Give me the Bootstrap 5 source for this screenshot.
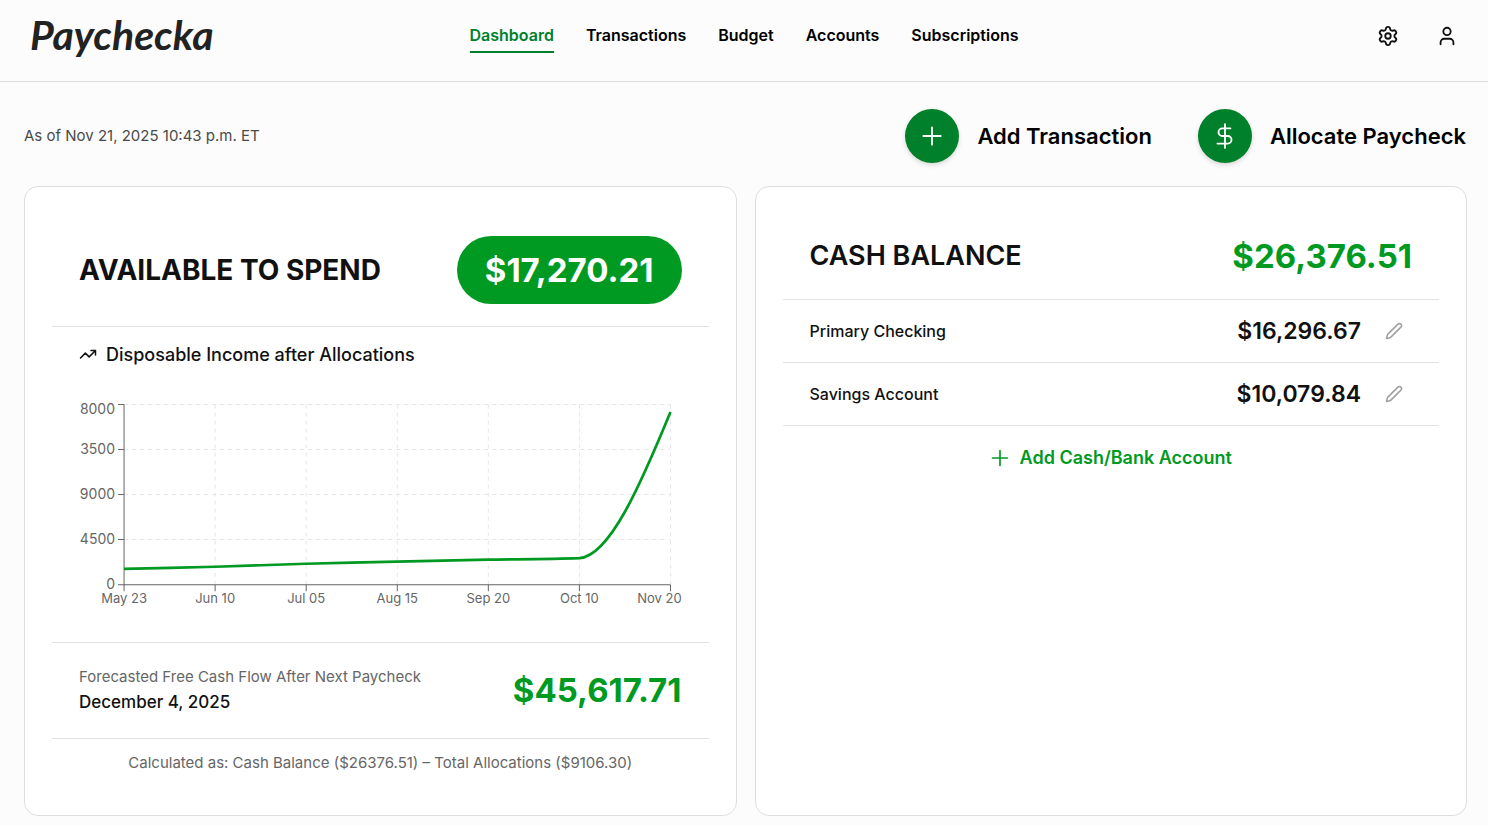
<!DOCTYPE html>
<html lang="en">
<head>
<meta charset="utf-8">
<meta name="viewport" content="width=device-width, initial-scale=1">
<title>Paychecka – Dashboard</title>
<link href="https://cdn.jsdelivr.net/npm/bootstrap@5.3.0/dist/css/bootstrap.min.css" rel="stylesheet">
<style>
  :root { --brand: #00802b; --money: #009a22; --line: #dedede; --ink: #111; }
  body { font-family: Inter, "Liberation Sans", sans-serif; font-size: 16px; line-height: 24px; background: #fcfcfc; color: var(--ink); }
  svg { display: block; }
  .icon { fill: none; stroke: currentColor; stroke-width: 2; stroke-linecap: round; stroke-linejoin: round; flex: none; }
  .icon-thin { stroke-width: 1.7; }
  .site-header { border-bottom: 1px solid var(--line); min-height: 82px; padding: 0 30px; }
  .side { flex: 1 1 0; }
  .brand-name { font-family: Lato, sans-serif; font-style: italic; font-weight: 700; font-size: 41px; line-height: 70px; color: #222; text-decoration: none; }
  .main-nav { gap: 32px; padding-top: 19px; }
  .main-nav a { color: #000; font-weight: 600; text-decoration: none; padding: 4px 0; border-bottom: 2px solid transparent; }
  .main-nav a.active { color: var(--brand); border-color: var(--brand); }
  .tools { gap: 37px; padding-top: 25px; }
  .plain { border: 0; background: none; padding: 0; color: inherit; }
  main { padding: 27px 21px 9px 24px; }
  .stamp { color: #4a4a4a; font-size: 15px; }
  .actions { gap: 46px; padding-right: 1px; }
  .action { font-size: 22px; font-weight: 600; color: #000; gap: 18px; }
  .disc { width: 54px; height: 54px; border-radius: 50%; background: var(--brand); color: #fff; box-shadow: 0 2px 5px rgba(0,0,0,.15); }
  .panels { --bs-gutter-x: 18px; margin-top: 23px; }
  .panel { background: #fff; border: 1px solid var(--line); border-radius: 14px; padding: 27px; height: 100%; }
  .band { padding-left: 27px; padding-right: 27px; border-bottom: 1px solid #e2e2e2; }
  .band-top { padding-top: 22px; padding-bottom: 22px; }
  .band-balance { padding-top: 22px; padding-bottom: 23px; }
  h2 { font-size: 28px; line-height: 40px; margin: 0; font-weight: 700; }
  h2.mid { font-size: 27px; font-weight: 600; }
  .total { font-size: 33px; line-height: 40px; font-weight: 700; color: var(--money); }
  .pill { background: var(--money); color: #fff; border-radius: 34px; padding: 14px 28px; }
  .chart-title { font-size: 18px; font-weight: 500; gap: 9px; padding-top: 16px; }
  .chart { width: 100%; margin-top: 28px; }
  .chart text { font-size: 13px; fill: #666; }
  .chart .scale text { font-size: 14px; }
  .chart-band { padding-bottom: 22px; }
  .forecast { padding-top: 22px; padding-bottom: 23px; }
  .muted { color: #666; font-size: 15px; }
  .date { font-size: 17px; line-height: 26px; font-weight: 500; }
  .note { padding: 12px 0 13px; }
  .account { height: 63px; }
  .acc-name { font-weight: 500; }
  .amount { font-size: 23px; font-weight: 600; }
  .pencil { color: #a0a0a0; margin: 0 9px 0 24px; }
  .add-account { color: var(--money); font-size: 18px; font-weight: 600; gap: 10px; padding-top: 20px; }
</style>
</head>
<body>
<header class="site-header d-flex align-items-start">
  <div class="side"><a class="brand-name" href="#">Paychecka</a></div>
  <nav class="main-nav d-flex" aria-label="Main">
    <a class="active" href="#" aria-current="page">Dashboard</a>
    <a href="#">Transactions</a>
    <a href="#">Budget</a>
    <a href="#">Accounts</a>
    <a href="#">Subscriptions</a>
  </nav>
  <div class="side tools d-flex justify-content-end">
    <button class="plain" type="button" aria-label="Settings"><svg class="icon" width="22" height="22" viewBox="0 0 24 24"><path d="M9.671 4.136a2.34 2.34 0 0 1 4.659 0 2.34 2.34 0 0 0 3.319 1.915 2.34 2.34 0 0 1 2.33 4.033 2.34 2.34 0 0 0 0 3.831 2.34 2.34 0 0 1-2.33 4.033 2.34 2.34 0 0 0-3.319 1.915 2.34 2.34 0 0 1-4.659 0 2.34 2.34 0 0 0-3.32-1.915 2.34 2.34 0 0 1-2.33-4.033 2.34 2.34 0 0 0 0-3.831A2.34 2.34 0 0 1 6.35 6.051a2.34 2.34 0 0 0 3.319-1.915"/><circle cx="12" cy="12" r="3"/></svg></button>
    <button class="plain" type="button" aria-label="Profile"><svg class="icon" width="22" height="22" viewBox="0 0 24 24"><path d="M19 21v-2a4 4 0 0 0-4-4H9a4 4 0 0 0-4 4v2"/><circle cx="12" cy="7" r="4"/></svg></button>
  </div>
</header>

<main>
  <div class="d-flex justify-content-between align-items-center">
    <div class="stamp">As of Nov 21, 2025 10:43 p.m. ET</div>
    <div class="actions d-flex">
      <button class="plain action d-flex align-items-center" type="button">
        <span class="disc d-flex align-items-center justify-content-center"><svg class="icon icon-thin" width="26" height="26" viewBox="0 0 24 24"><path d="M4 12h16M12 4v16"/></svg></span>
        Add Transaction
      </button>
      <button class="plain action d-flex align-items-center" type="button">
        <span class="disc d-flex align-items-center justify-content-center"><svg class="icon icon-thin" width="26" height="26" viewBox="0 0 24 24"><path d="M12 1v22M17 5H9.500a3.500 3.500 0 0 0 0 7h5a3.500 3.500 0 0 1 0 7H5"/></svg></span>
        Allocate Paycheck
      </button>
    </div>
  </div>

  <div class="row panels">
    <div class="col-6">
      <section class="panel">
        <div class="band band-top d-flex justify-content-between align-items-center">
          <h2>AVAILABLE TO SPEND</h2>
          <div class="total pill">$17,270.21</div>
        </div>
        <div class="band chart-band">
          <div class="chart-title d-flex align-items-center">
            <svg class="icon" width="18" height="18" viewBox="0 0 24 24"><path d="M16 6h6v6M22 6l-8.500 8.500-5-5L2 16"/></svg>
            Disposable Income after Allocations
          </div>
          <svg class="chart" viewBox="-1 0 602 225" role="img" aria-label="Disposable income from May 23 to Nov 20">
            <g stroke="#e6e6e6" stroke-dasharray="4 4" fill="none">
              <path d="M44 9.500H590M44 54.500H590M44 99.500H590M44 144.500H590"/>
              <path d="M135 9.500V189M226 9.500V189M317 9.500V189M408 9.500V189M499 9.500V189M590 9.500V189"/>
            </g>
            <g stroke="#666" fill="none">
              <path d="M44 9.500V189.500H590"/>
              <path d="M38 9.500H44M38 54.500H44M38 99.500H44M38 144.500H44M38 189.500H44"/>
              <path d="M44 189.500V196M135 189.500V196M226 189.500V196M317 189.500V196M408 189.500V196M499 189.500V196M590 189.500V196"/>
            </g>
            <path fill="none" stroke="#009a22" stroke-width="2.700" d="M44 173.700C74 173.200 105 172.500 135 171.600C165 170.700 196 169.500 226 168.600C256 167.700 287 167.200 317 166.500C347 165.800 378 165.100 408 164.600C438 164.100 469 164 499 163C529 161 560 90 590 17"/>
            <g class="scale" text-anchor="end">
              <text x="35" y="19">8000</text><text x="35" y="59">3500</text><text x="35" y="104">9000</text><text x="35" y="149">4500</text><text x="35" y="194">0</text>
            </g>
            <g text-anchor="middle">
              <text x="44" y="208">May 23</text><text x="135" y="208">Jun 10</text><text x="226" y="208">Jul 05</text><text x="317" y="208">Aug 15</text><text x="408" y="208">Sep 20</text><text x="499" y="208">Oct 10</text><text x="579" y="208">Nov 20</text>
            </g>
          </svg>
        </div>
        <div class="band forecast d-flex justify-content-between align-items-center">
          <div>
            <div class="muted">Forecasted Free Cash Flow After Next Paycheck</div>
            <div class="date">December 4, 2025</div>
          </div>
          <div class="total">$45,617.71</div>
        </div>
        <div class="note muted text-center">Calculated as: Cash Balance ($26376.51) – Total Allocations ($9106.30)</div>
      </section>
    </div>
    <div class="col-6">
      <section class="panel">
        <div class="band band-balance d-flex justify-content-between align-items-center">
          <h2 class="mid">CASH BALANCE</h2>
          <div class="total">$26,376.51</div>
        </div>
        <div class="band account d-flex align-items-center">
          <span class="acc-name flex-fill">Primary Checking</span>
          <span class="amount">$16,296.67</span>
          <button class="plain pencil" type="button" aria-label="Edit Primary Checking"><svg class="icon" width="18" height="18" viewBox="0 0 24 24"><path d="M21.174 6.812a1 1 0 0 0-3.986-3.987L3.842 16.174a2 2 0 0 0-.5.83l-1.321 4.352a.5.5 0 0 0 .623.622l4.353-1.320a2 2 0 0 0 .83-.497z"/></svg></button>
        </div>
        <div class="band account d-flex align-items-center">
          <span class="acc-name flex-fill">Savings Account</span>
          <span class="amount">$10,079.84</span>
          <button class="plain pencil" type="button" aria-label="Edit Savings Account"><svg class="icon" width="18" height="18" viewBox="0 0 24 24"><path d="M21.174 6.812a1 1 0 0 0-3.986-3.987L3.842 16.174a2 2 0 0 0-.5.83l-1.321 4.352a.5.5 0 0 0 .623.622l4.353-1.320a2 2 0 0 0 .83-.497z"/></svg></button>
        </div>
        <button class="plain add-account d-flex align-items-center justify-content-center w-100" type="button">
          <svg class="icon" width="20" height="20" viewBox="0 0 24 24"><path d="M3 12h18M12 3v18"/></svg>
          Add Cash/Bank Account
        </button>
      </section>
    </div>
  </div>
</main>
<script src="https://cdn.jsdelivr.net/npm/bootstrap@5.3.0/dist/js/bootstrap.bundle.min.js"></script>
</body>
</html>
